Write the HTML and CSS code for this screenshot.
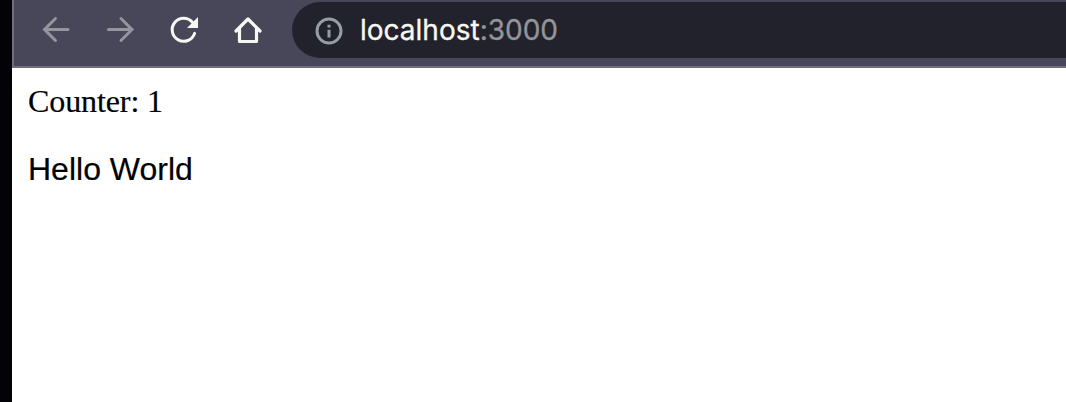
FILE: index.html
```html
<!DOCTYPE html>
<html lang="en">
<head>
<meta charset="utf-8">
<title>localhost:3000</title>
<link rel="stylesheet" href="styles.css">
</head>
<body>
<div class="window">
  <header class="toolbar">
    <nav class="controls">
      <svg class="icon muted" viewBox="0 0 32 32"><path d="M28 15.5H5M15.5 4.5L4.5 15.5L15.5 26.5"/></svg>
      <svg class="icon muted" viewBox="0 0 32 32"><path d="M4.5 15.5H27.5M17 4.5L28 15.5L17 26.5"/></svg>
      <svg class="icon" viewBox="0 0 32 32"><path stroke-linecap="round" d="M24.4 8.3A11.5 11.5 0 1 0 26.6 19.4"/><path class="solid" d="M30 3V14H19Z"/></svg>
      <svg class="icon" viewBox="0 0 32 32"><path class="home" d="M4 17L16 5L28 17M7.5 14V27.5H24.5V14"/></svg>
    </nav>
    <div class="address">
      <svg class="info" viewBox="0 0 28 28"><circle cx="14" cy="14" r="12"/><path d="M14 12.7V20.5M14 7.7V10.4"/></svg>
      <span class="url"><span class="host">localhost</span><span class="port">:3000</span></span>
    </div>
  </header>
  <main class="page">
    <div class="counter">Counter: 1</div>
    <p class="greeting">Hello World</p>
  </main>
</div>
</body>
</html>
```
FILE: styles.css
```css
* { box-sizing: border-box; }
body {
  margin: 0;
  height: 402px;
  padding-left: 12px;
  overflow: hidden;
  background: #020207;
}
.window { height: 100%; display: flex; flex-direction: column; background: #fff; }
.toolbar {
  height: 68px;
  display: flex;
  align-items: flex-start;
  padding-top: 2px;
  background: #474759;
  border-left: 2px solid #706d7e;
  border-bottom: 2px solid #706d7e;
}
.controls { display: flex; gap: 32px; padding: 12px 0 0 26px; }
.icon { width: 32px; height: 32px; display: block; fill: none; stroke: #f8f8f2; stroke-width: 3; }
.icon.muted { stroke: #96949c; stroke-linecap: round; }
.icon .solid { fill: #f8f8f2; stroke: none; }
.icon .home { stroke-linejoin: round; stroke-linecap: round; stroke-width: 3.2; }
.address {
  flex: 1;
  height: 56px;
  margin-left: 28px;
  padding-left: 22.5px;
  display: flex;
  align-items: center;
  background: #22222c;
  border-radius: 28px 0 0 28px;
}
.info { width: 28px; height: 28px; margin-top: 1px; fill: none; stroke: #979ea3; stroke-width: 3; }
.url {
  margin-left: 17.5px;
  font: 28px/56px Inter, sans-serif;
  color: #f8f8f2;
  -webkit-text-stroke: 0.3px currentColor;
}
.port { color: #94949a; }
.page { padding: 15px 16px; color: #000; font: 32px/36px "Liberation Serif", serif; }
.counter { letter-spacing: -0.1px; }
.greeting { margin: 32px 0 0; font-family: "Liberation Sans", sans-serif; }
.page { -webkit-text-stroke: 0.2px currentColor; }
```
